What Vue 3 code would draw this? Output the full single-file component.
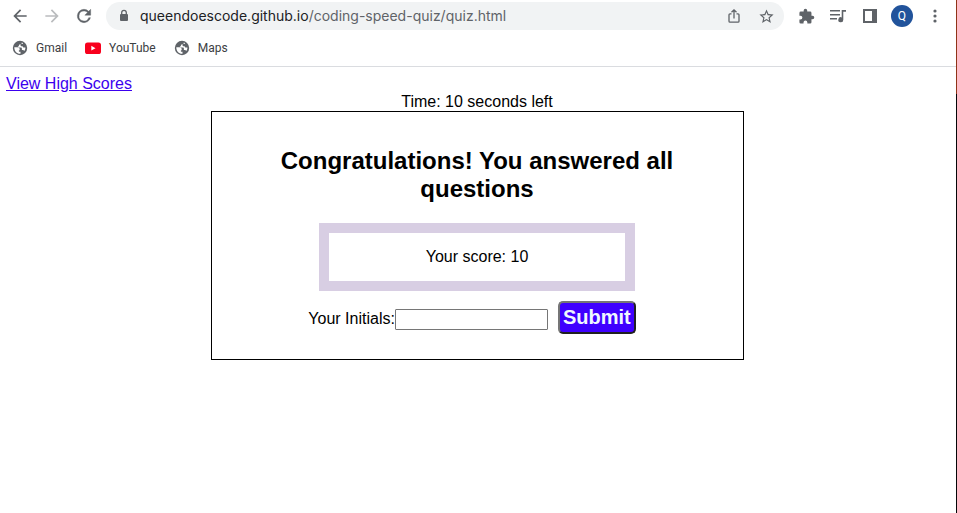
<script setup>
import { ref } from 'vue'

const host = 'queendoescode.github.io'
const path = '/coding-speed-quiz/quiz.html'
const bookmarks = [
  { name: 'Gmail', icon: 'globe' },
  { name: 'YouTube', icon: 'youtube' },
  { name: 'Maps', icon: 'globe' },
]
const secondsLeft = ref(10)
const score = ref(10)
const initials = ref('')
</script>

<template>
  <div class="desktop">
    <div class="window">
      <header class="chrome">
        <div class="toolbar">
          <nav class="history">
            <button class="icon-button" aria-label="Back">
              <svg width="20" height="20" viewBox="0 0 24 24"><path fill="#5f6368" d="M20 11H7.83l5.59-5.59L12 4l-8 8 8 8 1.41-1.41L7.83 13H20v-2z" /></svg>
            </button>
            <button class="icon-button" aria-label="Forward">
              <svg width="20" height="20" viewBox="0 0 24 24"><path fill="#babcbe" d="M12 4l-1.41 1.41L16.17 11H4v2h12.17l-5.58 5.59L12 20l8-8z" /></svg>
            </button>
            <button class="icon-button" aria-label="Reload">
              <svg width="20" height="20" viewBox="0 0 24 24"><path fill="#5f6368" stroke="#5f6368" stroke-width="0.5" d="M17.65 6.35A7.96 7.96 0 0 0 12 4a8 8 0 1 0 7.73 10h-2.08A6 6 0 1 1 12 6c1.66 0 3.14.69 4.22 1.78L13 11h7V4l-2.35 2.35z" /></svg>
            </button>
          </nav>
          <div class="address">
            <svg class="lock" width="14" height="14" viewBox="0 0 14 14">
              <rect x="3" y="5" width="8" height="7" rx="1" fill="#5f6368" />
              <path d="M4.7 5.5V3.6a2.3 2.3 0 0 1 4.6 0v1.9" fill="none" stroke="#5f6368" stroke-width="1.3" />
            </svg>
            <span class="url">{{ host }}<span class="path">{{ path }}</span></span>
            <button class="icon-button" aria-label="Share">
              <svg width="16" height="16" viewBox="0 0 16 16" fill="none" stroke="#5f6368" stroke-width="1.3">
                <path d="M5.5 5.8H4a1 1 0 0 0-1 1v6.4a1 1 0 0 0 1 1h8a1 1 0 0 0 1-1V6.8a1 1 0 0 0-1-1h-1.5M8 10.5V2M5.5 4.3L8 1.8l2.500 2.500" />
              </svg>
            </button>
            <button class="icon-button" aria-label="Bookmark this page">
              <svg width="17" height="17" viewBox="0 0 24 24"><path fill="#5f6368" d="M22 9.240l-7.190-.62L12 2 9.190 8.630 2 9.240l5.460 4.730L5.820 21 12 17.270 18.180 21l-1.630-7.030L22 9.240zM12 15.400l-3.760 2.270 1-4.280-3.320-2.880 4.380-.38L12 6.100l1.710 4.040 4.380.38-3.320 2.880 1 4.280L12 15.400z" /></svg>
            </button>
          </div>
          <div class="actions">
            <button class="icon-button" aria-label="Extensions">
              <svg width="17" height="17" viewBox="0 0 24 24"><path fill="#5f6368" d="M20.500 11H19V7a2 2 0 0 0-2-2h-4V3.500a2.500 2.500 0 0 0-5 0V5H4a2 2 0 0 0-2 2v3.800h1.500a2.700 2.700 0 0 1 0 5.400H2V20a2 2 0 0 0 2 2h3.800v-1.500a2.700 2.700 0 0 1 5.400 0V22H17a2 2 0 0 0 2-2v-4h1.500a2.500 2.500 0 0 0 0-5z" /></svg>
            </button>
            <button class="icon-button" aria-label="Media controls">
              <svg width="18" height="16" viewBox="0 0 18 16" fill="#5f6368">
                <path d="M1 2h10v1.600H1zM1 6h10v1.600H1zM1 10h7v1.600H1zM12.700 2H17v1.700h-2.700v8a2.500 2.500 0 1 1-1.600-2.300z" />
              </svg>
            </button>
            <button class="icon-button" aria-label="Side panel">
              <svg width="14" height="14" viewBox="0 0 14 14"><path fill="#5f6368" fill-rule="evenodd" d="M0 0h14v14H0zM2 2v10h7V2z" /></svg>
            </button>
            <button class="avatar" aria-label="Profile">Q</button>
            <button class="icon-button" aria-label="Menu">
              <svg width="4" height="14" viewBox="0 0 4 14" fill="#5f6368"><circle cx="2" cy="2" r="1.600" /><circle cx="2" cy="7" r="1.600" /><circle cx="2" cy="12" r="1.600" /></svg>
            </button>
          </div>
        </div>
        <nav class="bookmarks">
          <a v-for="mark in bookmarks" :key="mark.name" href="#" class="bookmark">
            <svg v-if="mark.icon === 'globe'" width="16" height="16" viewBox="0 0 16 16">
              <circle cx="8" cy="8" r="7.200" fill="#5f6368" />
              <path fill="#fff" d="M9.800 2.500C9.900 3.700 9.200 4.400 8 4.400c-.9 0-1.100.5-1.100 1.200 0 .6-.4 1-1 1v1h2.800c.8 0 1.200.5 1.200 1.200v1.100h.8c.8 0 1.300.4 1.500 1.100.9-1 1.300-2 1.200-3.400h-1.300c-.9 0-1.400-.5-1.400-1.300h-.9c-.8 0-1.200-.4-1.200-1.100s.4-1.100 1.100-1.100h1.100V2.900z" />
              <path fill="#fff" d="M2.300 7.200h3.100c1.500 0 2.300.8 2.300 2.200v.8h-.8v1.500H8.500v2C5 13.900 2.200 11 2.300 7.200z" />
            </svg>
            <svg v-else width="16" height="16" viewBox="0 0 16 16">
              <rect y="2.500" width="16" height="11.500" rx="2.600" fill="#f8001d" />
              <path d="M6.300 5.800v4.800l4.200-2.400z" fill="#fff" />
            </svg>
            <span>{{ mark.name }}</span>
          </a>
        </nav>
      </header>

      <main class="page">
        <a href="#" class="scores-link">View High Scores</a>
        <div class="timer">Time: {{ secondsLeft }} seconds left</div>
        <section class="quiz">
          <h2>Congratulations! You answered all questions</h2>
          <div class="score">Your score: {{ score }}</div>
          <form class="entry" @submit.prevent>
            <label for="initials">Your Initials:</label>
            <input id="initials" v-model="initials" type="text" />
            <button type="submit" class="submit">Submit</button>
          </form>
        </section>
      </main>
    </div>
    <div class="edge"></div>
  </div>
</template>

<style>
body {
  margin: 0;
  background: #fff;
}
</style>

<style scoped>
.desktop {
  display: flex;
  min-height: 100vh;
}
.window {
  flex: 1;
  min-width: 0;
}
.edge {
  width: 1px;
  background: linear-gradient(#8f3318 94px, #050608 94px);
}
.chrome {
  border-bottom: 1px solid #dadce0;
  font-family: Roboto, sans-serif;
}
.toolbar {
  display: flex;
  align-items: center;
  height: 32px;
  padding: 0 11px 0 10px;
}
.history {
  display: flex;
  gap: 12px;
}
.icon-button {
  display: flex;
  align-items: center;
  justify-content: center;
  width: 20px;
  height: 20px;
  padding: 0;
  border: 0;
  background: none;
}
.address {
  display: flex;
  flex: 1;
  align-items: center;
  gap: 12px;
  box-sizing: border-box;
  height: 28px;
  margin-left: 12px;
  padding: 0 8px 0 11px;
  border-radius: 14px;
  background: #f1f3f4;
}
.lock {
  flex: none;
}
.url {
  flex: 1;
  margin-left: -3px;
  color: #202124;
  font-family: Inter, sans-serif;
  font-size: 14px;
  line-height: 20px;
}
.path {
  color: #5f6368;
}
.actions {
  display: flex;
  align-items: center;
  gap: 12px;
  margin-left: 12px;
}
.avatar {
  width: 22px;
  height: 22px;
  margin-left: -1px;
  padding: 0;
  border: 0;
  border-radius: 50%;
  background: #21539b;
  color: #fff;
  font: 12px/22px Roboto, sans-serif;
}
.bookmarks {
  display: flex;
  align-items: center;
  gap: 18px;
  height: 34px;
  padding: 0 12px 2px;
  box-sizing: border-box;
}
.bookmark {
  display: flex;
  align-items: center;
  gap: 8px;
  color: #3c4043;
  font-size: 12px;
  line-height: 16px;
  text-decoration: none;
}
.page {
  padding: 8px 8px 8px 6px;
  color: #000;
  font: 16px/18px "Liberation Sans", Arial, sans-serif;
  text-align: center;
}
.scores-link {
  display: block;
  width: fit-content;
  color: #3b00ee;
}
.quiz {
  box-sizing: border-box;
  max-width: 533px;
  margin: 0 auto;
  padding: 35px 60px 25px;
  border: 1px solid #000;
}
h2 {
  margin: 0 0 20px;
  font-size: 24px;
  line-height: 28px;
}
.score {
  box-sizing: border-box;
  max-width: 316px;
  margin: 0 auto 10px;
  padding: 15px;
  border: 10px solid #d8cee3;
}
.entry {
  display: flex;
  align-items: baseline;
  justify-content: center;
}
.entry input {
  box-sizing: border-box;
  width: 153px;
  height: 21px;
  padding: 1px 2px;
  border: 1px solid #767676;
  border-radius: 1px;
  font-size: 13px;
}
.submit {
  margin: 0 10px;
  padding: 3px;
  border: 2px outset #767676;
  border-radius: 5px;
  background: #3f00ff;
  color: #f0f8ff;
  font: bold 20px/23px "Liberation Sans", Arial, sans-serif;
}
</style>
